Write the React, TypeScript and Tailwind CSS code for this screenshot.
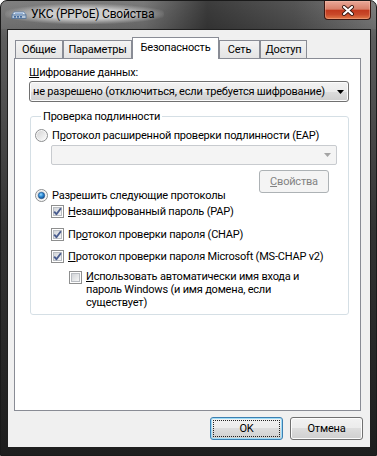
import React from 'react'

const btnBg = 'bg-[linear-gradient(to_bottom,#f2f2f2_0%,#ebebeb_50%,#dddddd_50%,#cfcfcf_100%)]'

function Radio({ checked }: { checked?: boolean }) {
  return (
    <svg width="13" height="13" viewBox="0 0 13 13" className="shrink-0">
      <defs>
        <linearGradient id="rbIn" x1="0" y1="0" x2="1" y2="1">
          <stop offset="0" stopColor="#d4d4d4" />
          <stop offset="1" stopColor="#fbfbfb" />
        </linearGradient>
        <radialGradient id="rbDot" cx="0.4" cy="0.35" r="0.75">
          <stop offset="0" stopColor="#9bd8ff" />
          <stop offset="0.45" stopColor="#2b8bd6" />
          <stop offset="1" stopColor="#0d3b79" />
        </radialGradient>
      </defs>
      <circle cx="6.5" cy="6.5" r="6" fill="#f6f6f6" stroke="#8c8e90" />
      <circle cx="6.5" cy="6.5" r="4.6" fill="url(#rbIn)" />
      {checked && <circle cx="6.5" cy="6.5" r="3.2" fill="url(#rbDot)" stroke="#1d4f8c" strokeWidth="0.6" />}
    </svg>
  )
}

function Check({ checked }: { checked?: boolean }) {
  return (
    <svg width="13" height="13" viewBox="0 0 13 13" className="shrink-0">
      <defs>
        <linearGradient id="cbIn" x1="0" y1="0" x2="1" y2="1">
          <stop offset="0" stopColor="#cfd2d6" />
          <stop offset="1" stopColor="#f8f8f8" />
        </linearGradient>
      </defs>
      <rect x="0.5" y="0.5" width="12" height="12" fill="#ffffff" stroke="#8e8f8f" />
      <rect x="2.5" y="2.5" width="8" height="8" fill="url(#cbIn)" stroke="#b9bdc2" />
      {checked && (
        <path d="M3.2 6.6 L5.4 9.2 L9.9 3.2" fill="none" stroke="#4a5d8f" strokeWidth="1.9" strokeLinejoin="round" />
      )}
    </svg>
  )
}

function Arrow({ color = '#000' }: { color?: string }) {
  return (
    <svg width="7" height="4" viewBox="0 0 7 4" className="shrink-0">
      <path d="M0 0 H7 L3.5 4 Z" fill={color} />
    </svg>
  )
}

function Tab({ label, width, active }: { label: string; width: string; active?: boolean }) {
  if (active) {
    return (
      <div className={`${width} relative z-10 -mb-px flex h-[22px] justify-center border border-b-0 border-[#898c95] bg-white pt-[2px]`}>
        {label}
      </div>
    )
  }
  return (
    <div className={`${width} flex h-[18px] items-center justify-center border border-b-0 border-[#898c95] bg-[linear-gradient(to_bottom,#f3f3f3,#e4e4e4)]`}>
      {label}
    </div>
  )
}

export default function App() {
  return (
    <div className="flex h-[456px] w-[377px] flex-col overflow-hidden rounded-t-[7px] border border-[#1a1a1a] bg-[linear-gradient(to_bottom,#7a7a7a_0%,#5e5e5e_8%,#333333_50%,#1e1e1e_100%)] pb-[7px] pl-[6px] pr-[5px] font-['Roboto',sans-serif] text-[11px] leading-[15px] tracking-[-0.2px] text-black whitespace-nowrap">
      {/* title bar */}
      <div className="-ml-[6px] -mr-[5px] flex h-[28px] items-start bg-[linear-gradient(to_right,rgba(255,255,255,0.05)_0%,rgba(0,0,0,0)_38%,rgba(0,0,0,0.5)_55%,rgba(0,0,0,0.3)_78%,rgba(255,255,255,0.05)_100%)]">
        <div className="ml-[4px] mt-[3px] flex items-center gap-[4px] rounded-[10px] bg-[radial-gradient(ellipse_at_center,rgba(235,235,235,0.75)_35%,rgba(200,200,200,0)_75%)] py-[2px] pl-[6px] pr-[10px]">
          <svg width="16" height="16" viewBox="0 0 16 16" className="shrink-0">
            <path d="M1 9 L3 6 H13 L15 9 Z" fill="#e9f1fa" stroke="#5b7fa8" strokeWidth="0.8" />
            <rect x="1" y="9" width="14" height="3.5" fill="#b8c8da" stroke="#4d6e96" strokeWidth="0.8" />
            <path d="M3 10.8 H5 M6 10.8 H8 M9 10.8 H11" stroke="#1f4e8c" strokeWidth="1.2" />
            <path d="M4 7.5 H12" stroke="#7fa5d2" strokeWidth="0.8" />
          </svg>
          <span className="text-[12px]">УКС (PPPoE) Свойства</span>
        </div>
        <div className="ml-auto mr-[5px] flex h-[19px] w-[47px] items-center justify-center rounded-b-[4px] border border-t-0 border-[#3a1712] bg-[linear-gradient(to_bottom,#e9a898_0%,#d8806a_45%,#c23a1e_52%,#c9492a_75%,#e07a48_100%)] shadow-[inset_0_0_0_1px_rgba(255,200,180,0.35)]">
          <svg width="14" height="11" viewBox="0 0 14 11">
            <path d="M3 2 L11 9 M11 2 L3 9" stroke="#3b1b14" strokeWidth="4" strokeLinecap="round" />
            <path d="M3 2 L11 9 M11 2 L3 9" stroke="#ffffff" strokeWidth="2.2" strokeLinecap="round" />
          </svg>
        </div>
      </div>

      {/* client area */}
      <div className="flex flex-1 flex-col border border-[#1f1f1f] bg-[#f0f0f0] pl-[6px] pt-[7px]">
        <div className="ml-[1px] flex h-[21px] items-end">
          <Tab label="Общие" width="w-[48px]" />
          <Tab label="Параметры" width="w-[69px]" />
          <Tab label="Безопасность" width="w-[87px]" active />
          <Tab label="Сеть" width="w-[41px]" />
          <Tab label="Доступ" width="w-[47px]" />
        </div>

        <div className="flex h-[353px] w-[347px] flex-col border border-[#898c95] bg-white pl-[14px] pt-[6px]">
          <div>
            <span className="underline">Ш</span>ифрование данных:
          </div>
          <div className={`mt-px flex h-[21px] w-[320px] items-center justify-between rounded-[3px] border border-[#707070] ${btnBg} pl-[3px] pr-[4px] shadow-[inset_0_0_0_1px_#fcfcfc]`}>
            <span>не разрешено (отключиться, если требуется шифрование)</span>
            <Arrow />
          </div>

          <fieldset className="ml-px mt-[7px] w-[319px] rounded-[3px] border border-[#d5dfe5] pb-[5px] pl-[4px]">
            <legend className="ml-[6px] px-[2px]">Проверка подлинности</legend>
            <div className="mt-[4px] flex items-center gap-[4px]">
              <Radio />
              <span>П<span className="underline">р</span>отокол расширенной проверки подлинности (EAP)</span>
            </div>
            <div className="ml-[16px] mt-[2px] flex h-[20px] w-[286px] items-center justify-end rounded-[2px] border border-[#c8cbcf] bg-[#f4f4f4] pr-[5px]">
              <Arrow color="#a4a4a4" />
            </div>
            <div className="ml-[224px] mt-[5px] flex h-[23px] w-[70px] items-center justify-center rounded-[3px] border border-[#adb2b5] bg-[#f4f4f4] text-[#838383]">
              <span><span className="underline">С</span>войства</span>
            </div>
            <div className="-mt-[5px] flex items-center gap-[4px]">
              <Radio checked />
              <span>Разрешить сле<span className="underline">д</span>ующие протоколы</span>
            </div>
            <div className="ml-[16px] mt-px flex items-center gap-[4px]">
              <Check checked />
              <span><span className="underline">Н</span>езашифрованный пароль (PAP)</span>
            </div>
            <div className="ml-[16px] mt-[8px] flex items-center gap-[4px]">
              <Check checked />
              <span>Пр<span className="underline">о</span>токол проверки пароля (CHAP)</span>
            </div>
            <div className="ml-[16px] mt-[7px] flex items-center gap-[4px]">
              <Check checked />
              <span><span className="underline">П</span>ротокол проверки пароля Microsoft (MS-CHAP v2)</span>
            </div>
            <div className="ml-[34px] mt-[6px] flex items-start gap-[4px]">
              <div className="pt-px">
                <Check />
              </div>
              <span className="leading-[13px]">
                <span className="underline">И</span>спользовать автоматически имя входа и
                <br />
                пароль Windows (и имя домена, если
                <br />
                существует)
              </span>
            </div>
          </fieldset>
        </div>

        <div className="mt-[6px] flex justify-end gap-[7px] pr-[7px]">
          <div className={`flex h-[23px] w-[73px] rounded-[3px] border border-[#3c7fb1] ${btnBg} p-[2px] shadow-[inset_0_0_0_1px_#9fdcf8]`}>
            <div className="flex flex-1 items-center justify-center border border-dotted border-[#222]">OK</div>
          </div>
          <div className={`flex h-[23px] w-[73px] items-center justify-center rounded-[3px] border border-[#707070] ${btnBg} shadow-[inset_0_0_0_1px_#fcfcfc]`}>
            Отмена
          </div>
        </div>
      </div>
    </div>
  )
}
